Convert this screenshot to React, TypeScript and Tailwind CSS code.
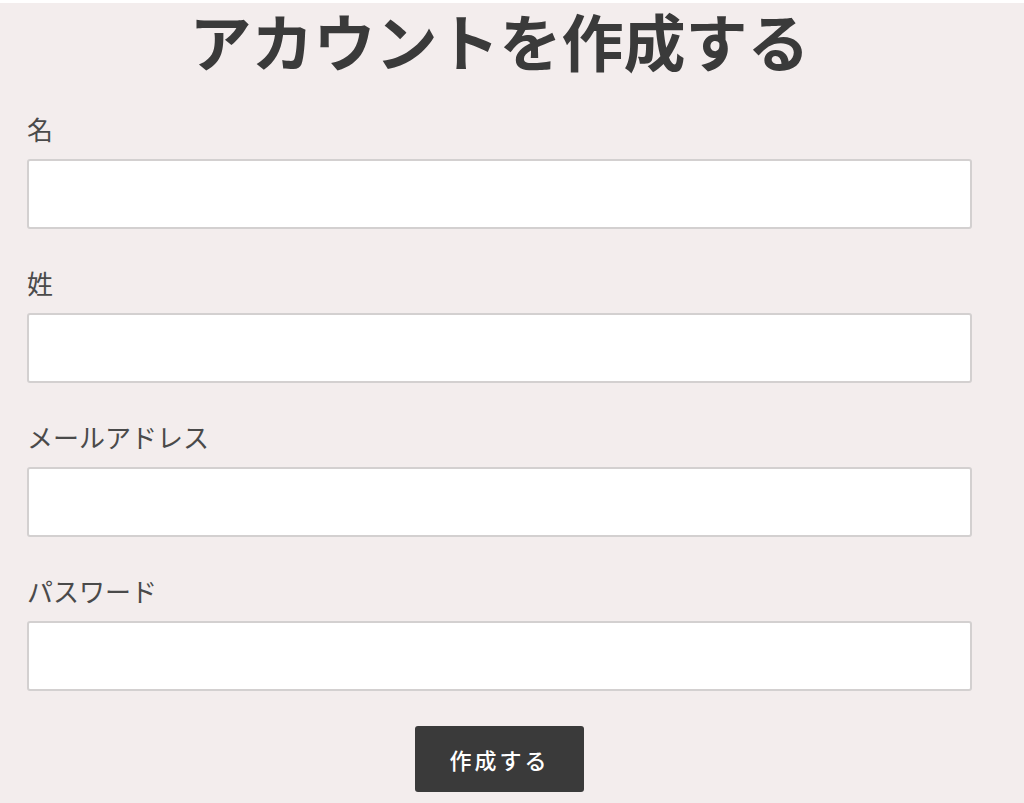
import React from 'react'

const fields = ['名', '姓', 'メールアドレス', 'パスワード']

export default function App() {
  return (
    <div
      className="min-h-[803px] w-[1024px] bg-[#f3eded] text-[#3d3d3d] border-t-[3px] border-white"
      style={{ fontFamily: '"Noto Sans CJK JP", "Noto Sans", sans-serif' }}
    >
      <div className="ml-[27px] w-[945px] flex flex-col">
        <h1 className="text-center text-[62px] font-bold leading-[74px] text-[#3a3a3a]">
          アカウントを作成する
        </h1>
        <form className="flex flex-col mt-[36px]" onSubmit={(e) => e.preventDefault()}>
          {fields.map((label, i) => (
            <div key={label} className={i > 0 ? 'mt-[38px]' : ''}>
              <label className="block text-[26px] leading-[32px] text-[#4a4a4a]">{label}</label>
              <input
                type={label === 'パスワード' ? 'password' : 'text'}
                className="mt-[14px] block w-full h-[70px] bg-white border-2 border-[#d3d0d0] rounded-[3px] outline-none"
              />
            </div>
          ))}
          <div className="flex justify-center mt-[35px]">
            <button
              type="submit"
              className="w-[169px] h-[66px] bg-[#3a3a3a] text-white text-[22px] font-medium tracking-[3px] rounded-[3px]"
            >
              作成する
            </button>
          </div>
        </form>
      </div>
    </div>
  )
}
